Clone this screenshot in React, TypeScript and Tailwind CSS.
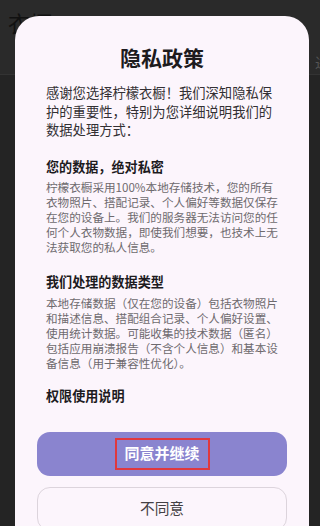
const SECTIONS = [
  {
    title: "您的数据，绝对私密",
    body: "柠檬衣橱采用100%本地存储技术，您的所有衣物照片、搭配记录、个人偏好等数据仅保存在您的设备上。我们的服务器无法访问您的任何个人衣物数据，即使我们想要，也技术上无法获取您的私人信息。",
  },
  {
    title: "我们处理的数据类型",
    body: "本地存储数据（仅在您的设备）包括衣物照片和描述信息、搭配组合记录、个人偏好设置、使用统计数据。可能收集的技术数据（匿名）包括应用崩溃报告（不含个人信息）和基本设备信息（用于兼容性优化）。",
  },
];

export default function App() {
  return (
    <div className="relative h-[526px] w-[320px] overflow-hidden bg-[#242424] font-['Noto_Sans_CJK_SC','Noto_Sans',sans-serif]">
      {/* page behind the dialog */}
      <div className="flex h-[75px] items-start justify-between border-b border-[#333333] bg-[#2a2a2a] pl-[8px]">
        <span className="mt-[8px] text-[22px] leading-[28px] text-[#111111]">衣橱</span>
        <span className="mr-[-9px] mt-[52px] text-[14px] leading-[20px] text-[#555555]">进</span>
      </div>

      {/* privacy dialog */}
      <div className="absolute left-[15px] top-[16px] flex h-[540px] w-[294px] flex-col rounded-t-[24px] bg-[#fcf5fc]">
        <h1 className="pt-[28px] text-center text-[21px] font-bold leading-[26px] text-[#1d1b1e]">
          隐私政策
        </h1>

        <div className="ml-[31px] w-[236px]">
          <p className="mt-[14px] w-[230px] text-[13.3px] leading-[18.5px] text-[#333033]">
            感谢您选择柠檬衣橱！我们深知隐私保护的重要性，特别为您详细说明我们的数据处理方式：
          </p>

          {SECTIONS.map((section) => (
            <div key={section.title} className="mt-[17px]">
              <h2 className="text-[13.1px] font-bold leading-[20px] text-[#1d1b1e]">
                {section.title}
              </h2>
              <p className="mt-[3.5px] text-[11.6px] leading-[15px] text-[#6e6a6e]">
                {section.body}
              </p>
            </div>
          ))}

          <h2 className="mt-[15px] text-[13.1px] font-bold leading-[20px] text-[#1d1b1e]">
            权限使用说明
          </h2>
        </div>

        <div className="ml-[22px] mt-[26px] flex w-[250px] flex-col gap-[11px]">
          <button className="flex h-[44px] items-center justify-center rounded-[13px] bg-[#8a84cf]">
            <span className="flex h-[32px] w-[95px] items-center justify-center border-2 border-[#e0383e] text-[15px] font-bold text-white">
              同意并继续
            </span>
          </button>
          <button className="flex h-[44px] items-center justify-center rounded-[13px] border border-[#dcd4dc] text-[14.7px] text-[#444144]">
            不同意
          </button>
        </div>
      </div>
    </div>
  );
}
